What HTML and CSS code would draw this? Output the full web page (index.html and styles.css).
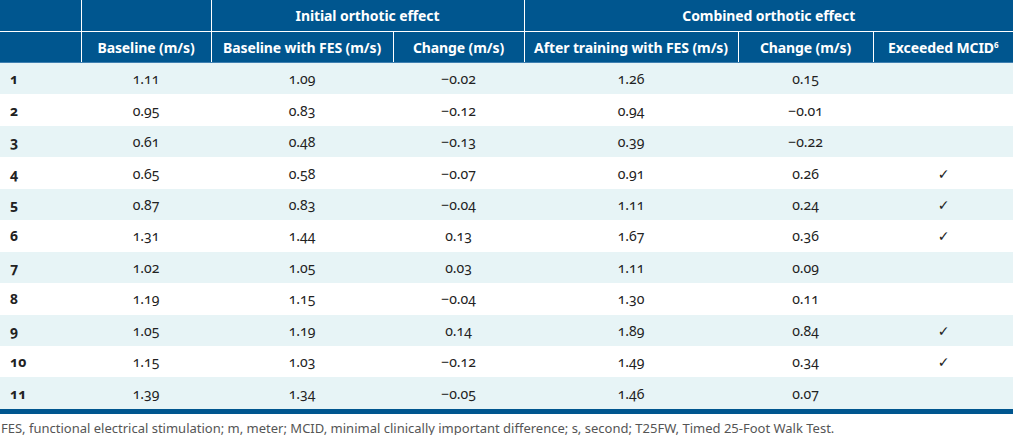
FILE: index.html
```html
<!DOCTYPE html>
<html>
<head>
<meta charset="utf-8">
<link rel="stylesheet" href="styles.css">
</head>
<body>
<table class="data">
  <colgroup>
    <col class="c1"><col class="c2"><col class="c3"><col class="c4"><col class="c5"><col class="c6"><col class="c7">
  </colgroup>
  <thead>
    <tr class="h1">
      <th></th><th></th>
      <th colspan="2">Initial orthotic effect</th>
      <th colspan="3">Combined orthotic effect</th>
    </tr>
    <tr class="h2">
      <th></th>
      <th>Baseline (m/s)</th>
      <th>Baseline with FES (m/s)</th>
      <th>Change (m/s)</th>
      <th>After training with FES (m/s)</th>
      <th>Change (m/s)</th>
      <th>Exceeded MCID<sup>6</sup></th>
    </tr>
  </thead>
  <tbody>
    <tr><td class="id">1</td><td>1.11</td><td>1.09</td><td>−0.02</td><td>1.26</td><td>0.15</td><td></td></tr>
    <tr><td class="id">2</td><td>0.95</td><td>0.83</td><td>−0.12</td><td>0.94</td><td>−0.01</td><td></td></tr>
    <tr><td class="id">3</td><td>0.61</td><td>0.48</td><td>−0.13</td><td>0.39</td><td>−0.22</td><td></td></tr>
    <tr><td class="id">4</td><td>0.65</td><td>0.58</td><td>−0.07</td><td>0.91</td><td>0.26</td><td class="ck">✓</td></tr>
    <tr><td class="id">5</td><td>0.87</td><td>0.83</td><td>−0.04</td><td>1.11</td><td>0.24</td><td class="ck">✓</td></tr>
    <tr><td class="id">6</td><td>1.31</td><td>1.44</td><td>0.13</td><td>1.67</td><td>0.36</td><td class="ck">✓</td></tr>
    <tr><td class="id">7</td><td>1.02</td><td>1.05</td><td>0.03</td><td>1.11</td><td>0.09</td><td></td></tr>
    <tr><td class="id">8</td><td>1.19</td><td>1.15</td><td>−0.04</td><td>1.30</td><td>0.11</td><td></td></tr>
    <tr><td class="id">9</td><td>1.05</td><td>1.19</td><td>0.14</td><td>1.89</td><td>0.84</td><td class="ck">✓</td></tr>
    <tr><td class="id">10</td><td>1.15</td><td>1.03</td><td>−0.12</td><td>1.49</td><td>0.34</td><td class="ck">✓</td></tr>
    <tr><td class="id">11</td><td>1.39</td><td>1.34</td><td>−0.05</td><td>1.46</td><td>0.07</td><td></td></tr>
  </tbody>
</table>
<p class="note">FES, functional electrical stimulation; m, meter; MCID, minimal clinically important difference; s, second; T25FW, Timed 25-Foot Walk Test.</p>
</body>
</html>
```
FILE: styles.css
```css
html, body {
  margin: 0;
  padding: 0;
  background: #ffffff;
}
body {
  font-family: "Noto Sans", "DejaVu Sans", sans-serif;
  width: 1013px;
}
.data {
  width: 1013px;
  border-collapse: collapse;
  table-layout: fixed;
  border-bottom: 5px solid #00568f;
}
.c1 { width: 81px; }
.c2 { width: 130px; }
.c3 { width: 182px; }
.c4 { width: 131px; }
.c5 { width: 214px; }
.c6 { width: 135px; }
.c7 { width: 140px; }
thead th {
  background: #00568f;
  color: #ffffff;
  font-weight: 700;
  font-size: 14px;
  letter-spacing: -0.1px;
  text-align: center;
  padding: 0;
  border-left: 1px solid #ffffff;
  white-space: nowrap;
}
thead th:first-child { border-left: none; }
.h1 th { height: 31px; border-bottom: 1px solid #ffffff; }
.h2 th { height: 30px; border-bottom: 1px solid #3f7fb0; }
sup {
  font-size: 8px;
  vertical-align: 5px;
  line-height: 0;
}
tbody td {
  height: 31.45px;
  padding: 0;
  text-align: center;
  font-size: 14px;
  color: #222222;
  font-variant-numeric: oldstyle-nums;
}
tbody tr:nth-child(odd) td { background: #e7f4f6; }
tbody td.id {
  text-align: left;
  padding-left: 10px;
  font-weight: 700;
}
tbody td.ck {
  font-size: 14px;
  padding-left: 1px;
}
.note {
  margin: 0;
  padding: 5px 0 0 1px;
  font-size: 13px;
  color: #555555;
}
```
